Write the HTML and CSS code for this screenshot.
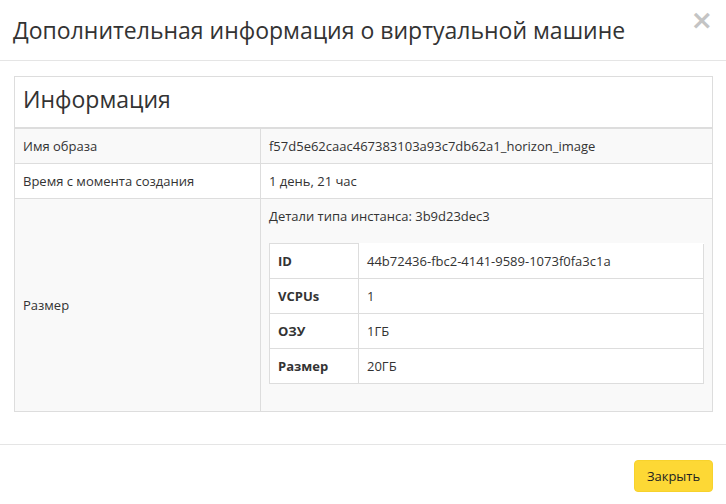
FILE: index.html
```html
<!DOCTYPE html>
<html lang="ru">
<head>
    <meta charset="UTF-8">
    <meta name="viewport" content="width=device-width, initial-scale=1.0">
    <title>Дополнительная информация о виртуальной машине</title>
    <link rel="stylesheet" href="styles.css">
</head>
<body>

<div class="modal">
    <div class="modal-header">
        <h4 class="modal-title">Дополнительная информация о виртуальной машине</h4>
        <button class="close" type="button">&times;</button>
    </div>

    <div class="modal-body">
        <div class="panel">
            <h3 class="panel-title">Информация</h3>
            <table class="info">
                <tr class="odd">
                    <td class="label">Имя образа</td>
                    <td>f57d5e62caac467383103a93c7db62a1_horizon_image</td>
                </tr>
                <tr>
                    <td class="label">Время с момента создания</td>
                    <td>1 день, 21 час</td>
                </tr>
                <tr class="odd">
                    <td class="label">Размер</td>
                    <td>
                        <p class="flavor">Детали типа инстанса: 3b9d23dec3</p>
                        <table class="flavor-table">
                            <tr><th>ID</th><td>44b72436-fbc2-4141-9589-1073f0fa3c1a</td></tr>
                            <tr><th>VCPUs</th><td>1</td></tr>
                            <tr><th>ОЗУ</th><td>1ГБ</td></tr>
                            <tr><th>Размер</th><td>20ГБ</td></tr>
                        </table>
                    </td>
                </tr>
            </table>
        </div>
    </div>

    <div class="modal-footer">
        <button class="btn-close" type="button">Закрыть</button>
    </div>
</div>

</body>
</html>
```

FILE: styles.css
```css
body {
    margin: 0;
    font-family: "Open Sans", Arial, sans-serif;
    font-size: 13px;
    color: #333;
    background: #fff;
}
.modal {
    width: 726px;
}
.modal-header {
    display: flex;
    justify-content: space-between;
    align-items: flex-start;
    height: 60px;
    padding: 0 13px 0 13px;
    border-bottom: 1px solid #e5e5e5;
}
.modal-title {
    margin: 13px 0 0;
    font-size: 23px;
    font-weight: normal;
    line-height: 34px;
    color: #333;
}
.close {
    margin-top: 6px;
    padding: 0;
    border: 0;
    background: none;
    font-family: "DejaVu Sans", sans-serif;
    font-size: 27px;
    font-weight: bold;
    line-height: 28px;
    color: #c4c4c4;
}
.modal-body {
    padding: 15px 13px 32px 14px;
}
.panel {
    border: 1px solid #ddd;
}
.panel-title {
    margin: 0;
    padding: 7px 8px 0;
    height: 43px;
    font-size: 23px;
    font-weight: normal;
    line-height: 30px;
    color: #333;
}
.info {
    width: 100%;
    border-collapse: collapse;
    border-top: 2px solid #ddd;
}
.info td {
    padding: 7px 8px;
    line-height: 20px;
    vertical-align: middle;
    border-top: 1px solid #ddd;
}
.info > tbody > tr > td:first-child,
.info > tr > td:first-child {
    width: 229px;
    border-right: 1px solid #ddd;
}
.info tr:first-child td {
    border-top: 0;
}
.info .odd {
    background: #f9f9f9;
}
.flavor {
    margin: 0 0 17px;
}
.flavor-table {
    width: 100%;
    margin-bottom: 20px;
    border-collapse: collapse;
    background: #fff;
}
.flavor-table th,
.flavor-table td {
    padding: 7px 8px;
    line-height: 20px;
    text-align: left;
    border: 1px solid #ddd;
}
.flavor-table th {
    width: 72px;
    font-weight: bold;
}
.modal-footer {
    display: flex;
    justify-content: flex-end;
    padding: 15px 13px 15px 0;
    border-top: 1px solid #e5e5e5;
}
.btn-close {
    height: 32px;
    width: 79px;
    padding: 0;
    border: 1px solid #f7d22c;
    border-radius: 4px;
    background: #fdd835;
    font-family: "Open Sans", Arial, sans-serif;
    font-size: 13px;
    color: #222;
}
```
